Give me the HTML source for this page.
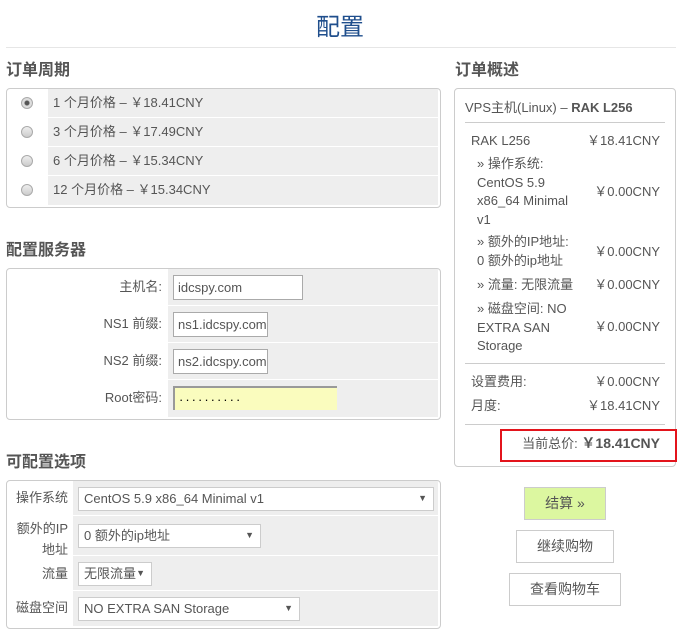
<!DOCTYPE html>
<html><head><meta charset="utf-8"><style>
*{box-sizing:border-box;margin:0;padding:0}
body{width:690px;height:633px;background:#fff;font-family:"Liberation Sans","Noto Sans CJK SC",sans-serif;font-size:13px;line-height:16px;color:#555;position:relative;overflow:hidden}
.a{position:absolute}
h2{position:absolute;font-size:16px;line-height:20px;font-weight:bold;color:#555}
.box{position:absolute;border:1px solid #ccc;border-radius:4px;background:#fff}
.g{position:absolute;background:#eee}
.inp{position:absolute;background:#fff;border:1px solid #aaa;padding:0 4px;line-height:23px;overflow:hidden;white-space:nowrap}
.sel{position:absolute;background:#fff;border:1px solid #ccc;padding:0 5px;line-height:21px;white-space:nowrap}
.sel:after{content:"▼";position:absolute;right:6px;top:0;font-size:9px;color:#555}
.rad{position:absolute;width:12px;height:12px;border-radius:50%;border:1px solid #aaa;background:linear-gradient(#eee,#ccc)}
.r{position:absolute;right:0;text-align:right}
.btn{position:absolute;border:1px solid #ccc;text-align:center;font-size:14px;color:#555}
</style></head><body>
<div class="a" style="left:0;width:680px;top:13px;text-align:center;font-size:24px;color:#1f4e8c;line-height:30px">配置</div>
<div class="a" style="left:6px;width:670px;top:47px;height:1px;background:#e6e6e6"></div>

<h2 style="left:6px;top:61px">订单周期</h2>
<div class="box" style="left:6px;top:88px;width:435px;height:120px"></div>
<div class="g" style="left:48px;top:89px;width:390px;height:28px"></div>
<div class="g" style="left:48px;top:118px;width:390px;height:28px"></div>
<div class="g" style="left:48px;top:147px;width:390px;height:28px"></div>
<div class="g" style="left:48px;top:176px;width:390px;height:29px"></div>
<div class="rad" style="left:21px;top:97px;background:radial-gradient(#555 2px,#ddd 3px)"></div>
<div class="rad" style="left:21px;top:126px"></div>
<div class="rad" style="left:21px;top:155px"></div>
<div class="rad" style="left:21px;top:184px"></div>
<div class="a" style="left:53px;top:95px">1 个月价格 – ￥18.41CNY</div>
<div class="a" style="left:53px;top:124px">3 个月价格 – ￥17.49CNY</div>
<div class="a" style="left:53px;top:153px">6 个月价格 – ￥15.34CNY</div>
<div class="a" style="left:53px;top:182px">12 个月价格 – ￥15.34CNY</div>

<h2 style="left:6px;top:241px">配置服务器</h2>
<div class="box" style="left:6px;top:268px;width:435px;height:152px"></div>
<div class="g" style="left:168px;top:269px;width:270px;height:36px"></div>
<div class="g" style="left:168px;top:306px;width:270px;height:36px"></div>
<div class="g" style="left:168px;top:343px;width:270px;height:36px"></div>
<div class="g" style="left:168px;top:380px;width:270px;height:37px"></div>
<div class="a" style="left:0;width:162px;text-align:right;top:279px">主机名:</div>
<div class="a" style="left:0;width:162px;text-align:right;top:316px">NS1 前缀:</div>
<div class="a" style="left:0;width:162px;text-align:right;top:353px">NS2 前缀:</div>
<div class="a" style="left:0;width:162px;text-align:right;top:390px">Root密码:</div>
<div class="inp" style="left:173px;top:275px;width:130px;height:25px">idcspy.com</div>
<div class="inp" style="left:173px;top:312px;width:95px;height:25px">ns1.idcspy.com</div>
<div class="inp" style="left:173px;top:349px;width:95px;height:25px">ns2.idcspy.com</div>
<div class="inp" style="left:173px;top:386px;width:164px;height:24px;background:#fafcbe;border:none;border-left:2px solid #999;border-top:2px solid #999;color:#000;letter-spacing:2px">··········</div>

<h2 style="left:6px;top:453px">可配置选项</h2>
<div class="box" style="left:6px;top:480px;width:435px;height:149px"></div>
<div class="g" style="left:73px;top:481px;width:365px;height:34px"></div>
<div class="g" style="left:73px;top:516px;width:365px;height:39px"></div>
<div class="g" style="left:73px;top:556px;width:365px;height:34px"></div>
<div class="g" style="left:73px;top:591px;width:365px;height:35px"></div>
<div class="a" style="left:0;width:68px;text-align:right;top:490px">操作系统</div>
<div class="a" style="left:0;width:68px;text-align:right;top:518px;line-height:21px">额外的IP<br>地址</div>
<div class="a" style="left:0;width:68px;text-align:right;top:566px">流量</div>
<div class="a" style="left:0;width:68px;text-align:right;top:600px">磁盘空间</div>
<div class="sel" style="left:78px;top:487px;width:356px;height:24px">CentOS 5.9 x86_64 Minimal v1</div>
<div class="sel" style="left:78px;top:524px;width:183px;height:24px">0 额外的ip地址</div>
<div class="sel" style="left:78px;top:562px;width:74px;height:24px">无限流量</div>
<div class="sel" style="left:78px;top:597px;width:222px;height:24px">NO EXTRA SAN Storage</div>

<h2 style="left:455px;top:61px">订单概述</h2>
<div class="box" style="left:454px;top:88px;width:222px;height:379px"></div>
<div class="a" style="left:465px;top:100px">VPS主机(Linux) – <b>RAK L256</b></div>
<div class="a" style="left:465px;top:122px;width:200px;height:1px;background:#ccc"></div>
<div class="a" style="left:471px;top:132px;width:189px;height:240px;line-height:18.5px">
<div class="a" style="left:0;top:0">RAK L256</div><div class="r" style="top:0">￥18.41CNY</div>
<div class="a" style="left:6px;top:23px;width:100px">» 操作系统: CentOS 5.9 x86_64 Minimal v1</div><div class="r" style="top:51px">￥0.00CNY</div>
<div class="a" style="left:6px;top:101px;width:100px">» 额外的IP地址: 0 额外的ip地址</div><div class="r" style="top:111px">￥0.00CNY</div>
<div class="a" style="left:6px;top:144px;width:100px">» 流量: 无限流量</div><div class="r" style="top:144px">￥0.00CNY</div>
<div class="a" style="left:6px;top:168px;width:100px">» 磁盘空间: NO EXTRA SAN Storage</div><div class="r" style="top:186px">￥0.00CNY</div>
</div>
<div class="a" style="left:465px;top:363px;width:200px;height:1px;background:#ccc"></div>
<div class="a" style="left:471px;top:374px">设置费用:</div><div class="a" style="left:560px;width:100px;text-align:right;top:374px">￥0.00CNY</div>
<div class="a" style="left:471px;top:398px">月度:</div><div class="a" style="left:560px;width:100px;text-align:right;top:398px">￥18.41CNY</div>
<div class="a" style="left:465px;top:424px;width:200px;height:1px;background:#ccc"></div>
<div class="a" style="left:500px;top:429px;width:177px;height:33px;border:2px solid #e3141c;background:#fff"></div>
<div class="a" style="left:500px;width:160px;text-align:right;top:435px">当前总价: <b style="font-size:14px">￥18.41CNY</b></div>

<div class="btn" style="left:524px;top:487px;width:82px;height:33px;line-height:31px;background:#dcf7a0">结算 »</div>
<div class="btn" style="left:516px;top:530px;width:98px;height:33px;line-height:31px">继续购物</div>
<div class="btn" style="left:509px;top:573px;width:112px;height:33px;line-height:31px">查看购物车</div>
</body></html>
